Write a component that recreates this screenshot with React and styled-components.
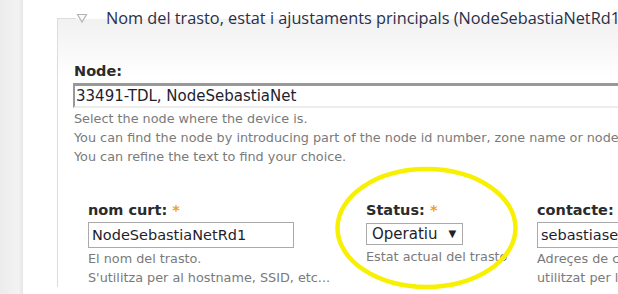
import styled, { createGlobalStyle } from "styled-components";

const Global = createGlobalStyle`
  html, body { margin: 0; padding: 0; background: #fff; }
  body { width: 618px; height: 294px; overflow: hidden; font-family: "DejaVu Sans", Verdana, sans-serif; }
`;

function App() {
  return (
    <Page>
      <Global />
      <Strip />
      <Main>
        <Fieldset>
          <Legend>
            <Toggle viewBox="0 0 12 10">
              <path d="M1.5 1.5 L10.5 1.5 L6 9 Z" fill="#fafafa" stroke="#b5b5b5" strokeWidth="1.2" />
            </Toggle>
            Nom del trasto, estat i ajustaments principals (NodeSebastiaNetRd1)
          </Legend>
          <NodeBlock>
            <Label>Node:</Label>
            <NodeInput>33491-TDL, NodeSebastiaNet</NodeInput>
            <Help>
              Select the node where the device is.<br />
              You can find the node by introducing part of the node id number, zone name or node name.<br />
              You can refine the text to find your choice.
            </Help>
          </NodeBlock>
          <Row>
            <Cell $w="278px">
              <Label>nom curt: <Star>*</Star></Label>
              <TextBox $w="206px">NodeSebastiaNetRd1</TextBox>
              <Help>
                El nom del trasto.<br />
                S'utilitza per al hostname, SSID, etc...
              </Help>
            </Cell>
            <Cell $w="171px">
              <Label>Status: <Star>*</Star></Label>
              <Select>
                Operatiu <Arrow>▼</Arrow>
              </Select>
              <Help>Estat actual del trasto</Help>
            </Cell>
            <Cell $w="300px">
              <Label>contacte:</Label>
              <TextBox $w="300px">sebastiaseguiesbert@gmail.com</TextBox>
              <Help>
                Adreçes de correu electrònic<br />
                utilitzat per localitzar el trasto
              </Help>
            </Cell>
          </Row>
        </Fieldset>
      </Main>
      <Ring viewBox="0 0 618 294">
        <ellipse cx="426.5" cy="228" rx="89" ry="59" fill="none" stroke="#f7f000" strokeWidth="4.5" />
      </Ring>
    </Page>
  );
}

const Page = styled.div`
  position: relative;
  display: flex;
  width: 618px;
  height: 294px;
  overflow: hidden;
`;

const Strip = styled.div`
  flex: 0 0 23px;
  background: linear-gradient(to right, #ececec, #f3f3f3 80%, #e6e6e6);
`;

const Main = styled.div`
  flex: 1;
  padding: 7px 0 0 34px;
  min-width: 0;
`;

const Fieldset = styled.fieldset`
  margin: 0;
  padding: 33px 0 0 16px;
  border: 1px solid #dcdcdc;
  border-right: none;
  border-bottom: none;
  width: 700px;
  background: linear-gradient(to bottom, #f1f1f1, #fafafa 38px, #fff 58px);
`;

const Legend = styled.legend`
  padding: 0 2px 0 0;
  margin: 0 0 0 2px;
  font-family: "Open Sans", "Segoe UI", sans-serif;
  font-size: 16.3px;
  color: #2a2f4a;
  white-space: nowrap;
  display: flex;
  align-items: center;
  gap: 18px;
`;

const Toggle = styled.svg`
  width: 12px;
  height: 10px;
`;

const NodeBlock = styled.div`
  display: flex;
  flex-direction: column;
`;

const Label = styled.div`
  font-weight: bold;
  font-size: 14.5px;
  color: #2b2b2b;
  line-height: 18px;
  margin-bottom: 3px;
`;

const Star = styled.span`
  color: #f0a020;
`;

const NodeInput = styled.div`
  width: 620px;
  height: 20px;
  border-top: 3px solid #999;
  border-left: 2px solid #999;
  border-bottom: 2px solid #ececec;
  background: #fff;
  font-size: 15px;
  line-height: 21px;
  padding-left: 1px;
  color: #1e1e2e;
  margin-left: -1px;
`;

const Help = styled.div`
  font-size: 12.8px;
  line-height: 19px;
  color: #7a7a7a;
  white-space: nowrap;
  margin-top: 1px;
`;

const Row = styled.div`
  display: flex;
  padding: 35px 0 0 14px;
`;

const Cell = styled.div`
  flex: 0 0 ${(p) => p.$w};
  display: flex;
  flex-direction: column;
  align-items: flex-start;
`;

const TextBox = styled.div`
  box-sizing: border-box;
  width: ${(p) => p.$w};
  height: 26px;
  border: 1px solid #aaa;
  background: #fff;
  font-size: 14.5px;
  line-height: 24px;
  padding-left: 3px;
  color: #1e1e2e;
  white-space: nowrap;
  overflow: hidden;
`;

const Select = styled.div`
  box-sizing: border-box;
  width: 97px;
  height: 22px;
  margin-top: 1px;
  margin-bottom: 1px;
  border: 1px solid #aaa;
  background: #fff;
  font-size: 15px;
  line-height: 20px;
  padding-left: 5px;
  color: #1e1e2e;
  display: flex;
  align-items: center;
  gap: 11px;
`;

const Arrow = styled.span`
  font-size: 10px;
  color: #222;
`;

const Ring = styled.svg`
  position: absolute;
  left: 0;
  top: 0;
  width: 618px;
  height: 294px;
  pointer-events: none;
`;

export default App;
